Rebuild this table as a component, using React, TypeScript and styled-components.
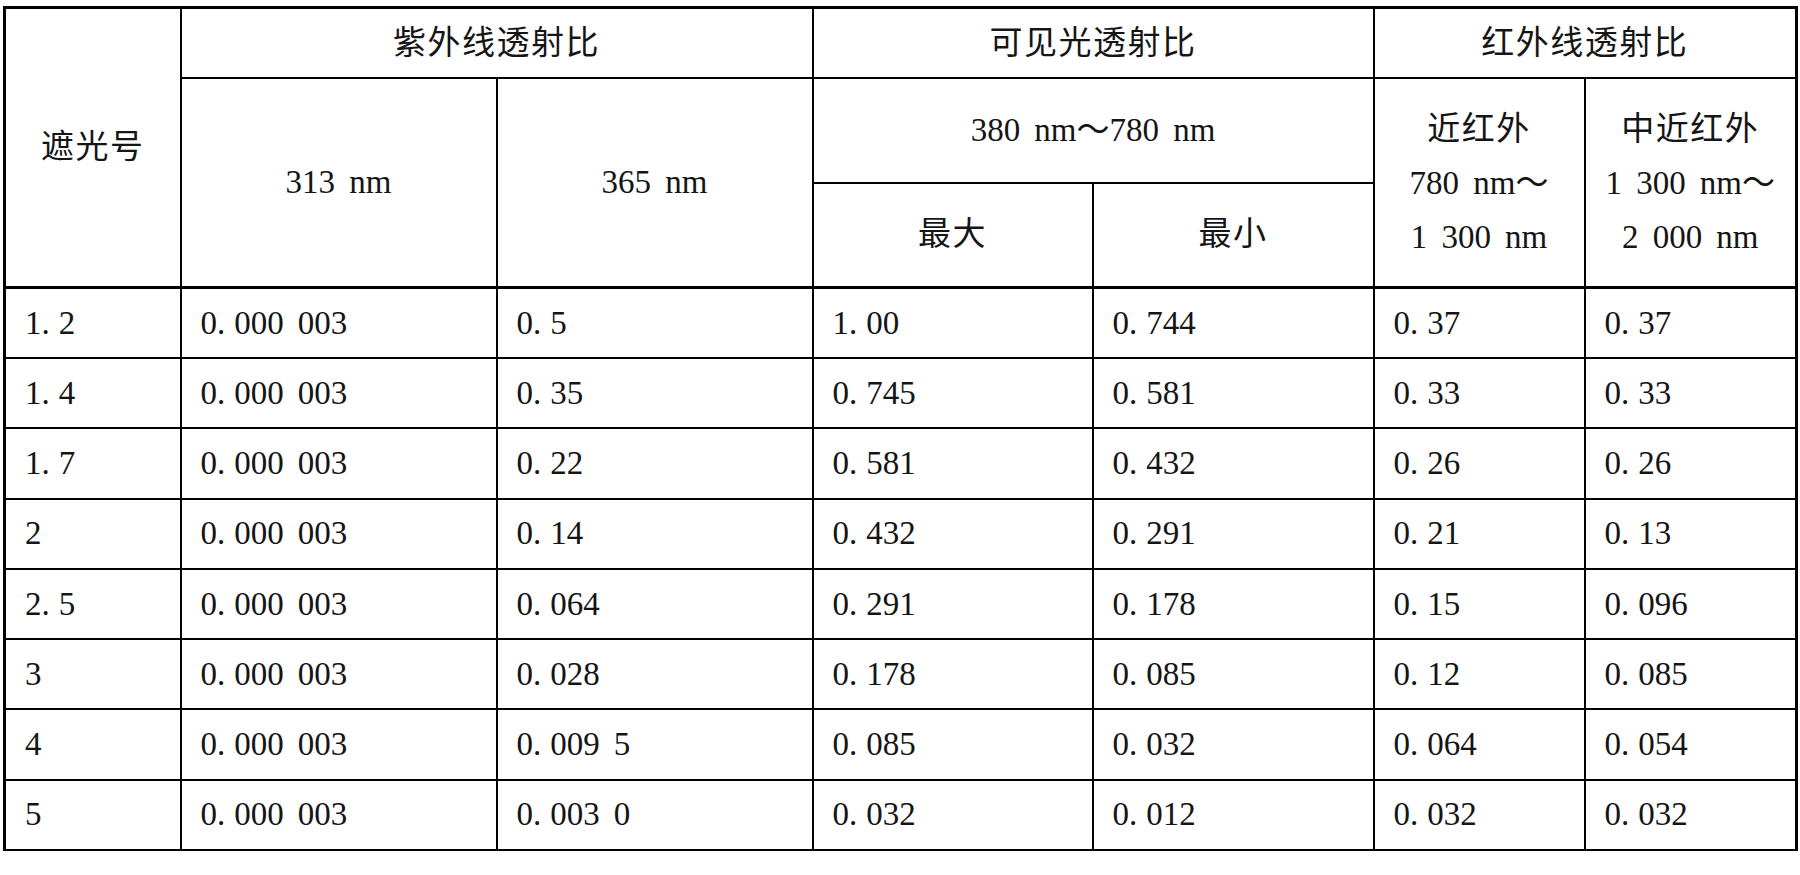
import React from "react";
import styled, { createGlobalStyle } from "styled-components";

const GlobalStyle = createGlobalStyle`
  html, body {
    margin: 0;
    padding: 0;
    background: #ffffff;
  }
  body {
    font-family: "Liberation Serif", "Noto Sans CJK SC", serif;
    color: #151515;
  }
`;

const Sheet = styled.div`
  padding: 6px 0 0 3px;
`;

const Table = styled.table`
  border-collapse: collapse;
  table-layout: fixed;
  width: 1795px;
  border-top: 3px solid #000;
  border-left: 3px solid #000;
  border-right: 3px solid #000;
  border-bottom: 2px solid #000;
  font-size: 33px;
  word-spacing: 0.18em;
`;

const HeadRow = styled.tr<{ $h: number }>`
  height: ${(p) => p.$h}px;
`;

const BodyRow = styled.tr`
  height: 70.3px;
  &:first-child td {
    border-top: 3px solid #000;
  }
`;

const HeadCell = styled.th<{ $cjk?: boolean }>`
  border: 2px solid #000;
  padding: 0;
  font-weight: 400;
  text-align: center;
  vertical-align: middle;
  line-height: 1;
  white-space: nowrap;
  letter-spacing: ${(p) => (p.$cjk ? "1.5px" : "0")};
`;

const Cell = styled.td`
  border: 2px solid #000;
  padding: 0 0 0 19px;
  text-align: left;
  vertical-align: middle;
  line-height: 1;
  white-space: nowrap;
`;

const Stack = styled.div`
  display: flex;
  flex-direction: column;
  align-items: center;
  line-height: 54px;
`;

const Han = styled.span`
  letter-spacing: 1.5px;
`;

const Dot = styled.span`
  margin-right: 0.27em;
`;

const Num: React.FC<{ v: string }> = ({ v }) => {
  const parts = v.split(".");
  return (
    <>
      {parts.map((p, i) => (
        <React.Fragment key={i}>
          {p}
          {i < parts.length - 1 && <Dot>.</Dot>}
        </React.Fragment>
      ))}
    </>
  );
};

const cols = [176, 316, 316, 280, 281, 211, 212];

const rows: string[][] = [
  ["1.2", "0.000 003", "0.5", "1.00", "0.744", "0.37", "0.37"],
  ["1.4", "0.000 003", "0.35", "0.745", "0.581", "0.33", "0.33"],
  ["1.7", "0.000 003", "0.22", "0.581", "0.432", "0.26", "0.26"],
  ["2", "0.000 003", "0.14", "0.432", "0.291", "0.21", "0.13"],
  ["2.5", "0.000 003", "0.064", "0.291", "0.178", "0.15", "0.096"],
  ["3", "0.000 003", "0.028", "0.178", "0.085", "0.12", "0.085"],
  ["4", "0.000 003", "0.009 5", "0.085", "0.032", "0.064", "0.054"],
  ["5", "0.000 003", "0.003 0", "0.032", "0.012", "0.032", "0.032"],
];

export default function App() {
  return (
    <>
      <GlobalStyle />
      <Sheet>
        <Table>
          <colgroup>
            {cols.map((w, i) => (
              <col key={i} width={w} />
            ))}
          </colgroup>
          <thead>
            <HeadRow $h={70.8}>
              <HeadCell rowSpan={3} $cjk>
                遮光号
              </HeadCell>
              <HeadCell colSpan={2} $cjk>
                紫外线透射比
              </HeadCell>
              <HeadCell colSpan={2} $cjk>
                可见光透射比
              </HeadCell>
              <HeadCell colSpan={2} $cjk>
                红外线透射比
              </HeadCell>
            </HeadRow>
            <HeadRow $h={104.4}>
              <HeadCell rowSpan={2}>313 nm</HeadCell>
              <HeadCell rowSpan={2}>365 nm</HeadCell>
              <HeadCell colSpan={2}>380 nm～780 nm</HeadCell>
              <HeadCell rowSpan={2}>
                <Stack>
                  <Han>近红外</Han>
                  <span>780 nm～</span>
                  <span>1 300 nm</span>
                </Stack>
              </HeadCell>
              <HeadCell rowSpan={2}>
                <Stack>
                  <Han>中近红外</Han>
                  <span>1 300 nm～</span>
                  <span>2 000 nm</span>
                </Stack>
              </HeadCell>
            </HeadRow>
            <HeadRow $h={105}>
              <HeadCell $cjk>最大</HeadCell>
              <HeadCell $cjk>最小</HeadCell>
            </HeadRow>
          </thead>
          <tbody>
            {rows.map((r, i) => (
              <BodyRow key={i}>
                {r.map((v, j) => (
                  <Cell key={j}>
                    <Num v={v} />
                  </Cell>
                ))}
              </BodyRow>
            ))}
          </tbody>
        </Table>
      </Sheet>
    </>
  );
}
